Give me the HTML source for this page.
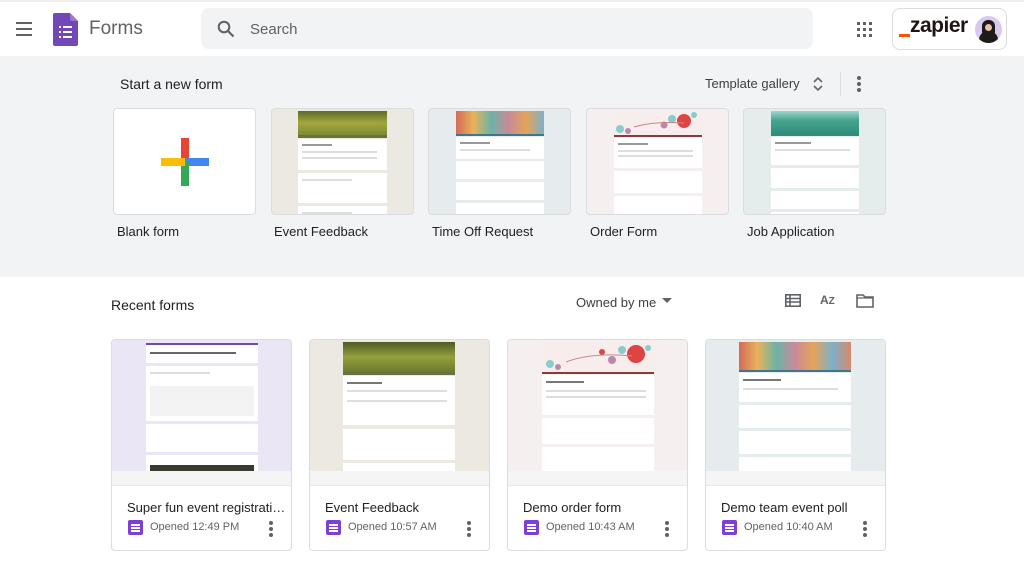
<!DOCTYPE html>
<html><head><meta charset="utf-8">
<style>
*{box-sizing:border-box;margin:0;padding:0}
body{width:1024px;height:562px;overflow:hidden;background:#fff;font-family:"Liberation Sans",Arial,sans-serif;color:#202124;position:relative}
.abs{position:absolute}
.topstrip{left:0;top:0;width:1024px;height:2px;background:#eee}
.search{left:201px;top:8px;width:612px;height:41px;background:#f1f3f4;border-radius:8px}
.gray{left:0;top:56px;width:1024px;height:221px;background:#f1f3f4}
.tcard{top:108px;width:143px;height:107px;border:1px solid #dadce0;border-radius:4px;overflow:hidden}
.tlabel{top:224px;font-size:13px;color:#202124}
.page{position:absolute;background:#fff}
.blk{position:absolute;left:0;right:0;background:#fff}
.line{position:absolute;height:2px;background:#e0e0e0}
.rcard{top:339px;width:181px;height:212px;border:1px solid #dadce0;border-radius:4px;overflow:hidden;background:#fff}
.rthumb{position:absolute;left:0;top:0;width:179px;height:131px;overflow:hidden}
.rstrip{position:absolute;left:0;top:131px;width:179px;height:15px;background:#f5f5f5;border-bottom:1px solid #e8e8e8}
.rtitle{position:absolute;left:15px;top:160px;font-size:13px;color:#202124;white-space:nowrap}
.ricon{position:absolute;left:16px;top:180px;width:15px;height:15px;background:#7e3fd4;border-radius:2px}
.ricon i{position:absolute;left:3px;width:9px;height:1.5px;background:#fff}
.rtime{position:absolute;left:38px;top:181px;font-size:11px;color:#5f6368}
.dots{position:absolute;width:4px}
.dots b{display:block;width:4px;height:4px;border-radius:2px;background:#5f6368;margin-bottom:2px}
.tx{position:absolute;height:2px;background:#ddd}
</style></head><body>
<div class="abs topstrip"></div>
<!-- hamburger -->
<div class="abs" style="left:16px;top:22px;width:16px;height:2px;background:#5f6368"></div>
<div class="abs" style="left:16px;top:28px;width:16px;height:2px;background:#5f6368"></div>
<div class="abs" style="left:16px;top:34px;width:16px;height:2px;background:#5f6368"></div>
<!-- forms logo -->
<svg class="abs" style="left:53px;top:13px" width="25" height="33" viewBox="0 0 25 33"><path d="M2 0H17L25 8V31a2 2 0 0 1-2 2H2a2 2 0 0 1-2-2V2a2 2 0 0 1 2-2z" fill="#7248b9"/><path d="M17 0L25 8H19a2 2 0 0 1-2-2z" fill="#9a75d3"/><g fill="#fff"><rect x="6" y="13" width="2" height="2"/><rect x="10" y="13" width="9" height="2"/><rect x="6" y="18" width="2" height="2"/><rect x="10" y="18" width="9" height="2"/><rect x="6" y="23" width="2" height="2"/><rect x="10" y="23" width="9" height="2"/></g></svg>
<div class="abs" style="left:89px;top:18px;font-size:19px;color:#5f6368">Forms</div>
<div class="abs search"></div>
<svg class="abs" style="left:217px;top:20px" width="18" height="18" viewBox="0 0 18 18"><circle cx="7" cy="7" r="5.3" fill="none" stroke="#5f6368" stroke-width="2"/><path d="M11 11l5.5 5.5" stroke="#5f6368" stroke-width="2.2"/></svg>
<div class="abs" style="left:250px;top:21px;font-size:15px;color:#5f6368">Search</div>
<!-- apps grid -->
<svg class="abs" style="left:857px;top:22px" width="15" height="15" viewBox="0 0 15 15" fill="#5f6368"><rect x="0" y="0" width="3" height="3"/><rect x="6" y="0" width="3" height="3"/><rect x="12" y="0" width="3" height="3"/><rect x="0" y="6" width="3" height="3"/><rect x="6" y="6" width="3" height="3"/><rect x="12" y="6" width="3" height="3"/><rect x="0" y="12" width="3" height="3"/><rect x="6" y="12" width="3" height="3"/><rect x="12" y="12" width="3" height="3"/></svg>
<!-- zapier -->
<div class="abs" style="left:892px;top:8px;width:115px;height:42px;border:1px solid #dadce0;border-radius:8px;background:#fff"></div>
<div class="abs" style="left:899px;top:34px;width:11px;height:3px;background:#ff4f00"></div>
<div class="abs" style="left:910px;top:14px;font-size:21px;font-weight:bold;color:#201515;letter-spacing:-0.5px">zapier</div>
<div class="abs" style="left:975px;top:16px;width:27px;height:27px;border-radius:50%;background:#d9c8ef;overflow:hidden"><div style="position:absolute;left:7px;top:4px;width:13px;height:15px;border-radius:6px 6px 3px 3px;background:#1f1a1a"></div><div style="position:absolute;left:4px;top:15px;width:19px;height:14px;border-radius:9px 9px 0 0;background:#1f1a1a"></div><div style="position:absolute;left:10px;top:8px;width:7px;height:7px;border-radius:50%;background:#e8c0a8"></div></div>

<div class="abs gray"></div>
<div class="abs" style="left:120px;top:76px;font-size:14px;color:#202124">Start a new form</div>
<div class="abs" style="left:705px;top:76px;font-size:13px;color:#3c4043">Template gallery</div>
<svg class="abs" style="left:812px;top:76px" width="12" height="16" viewBox="0 0 12 16"><path d="M2 6l4-4 4 4M2 10l4 4 4-4" fill="none" stroke="#5f6368" stroke-width="1.6"/></svg>
<div class="abs" style="left:840px;top:72px;width:1px;height:24px;background:#dadce0"></div>
<div class="dots" style="left:857px;top:76px"><b></b><b></b><b></b></div>

<!-- blank -->
<div class="abs tcard" style="left:113px;background:#fff">
 <div class="abs" style="left:67px;top:29px;width:8px;height:24px;background:#ea4335"></div>
 <div class="abs" style="left:71px;top:49px;width:24px;height:8px;background:#4285f4"></div>
 <div class="abs" style="left:67px;top:53px;width:8px;height:24px;background:#34a853"></div>
 <div class="abs" style="left:47px;top:49px;width:24px;height:8px;background:#fbbc04"></div>
</div>
<!-- event feedback -->
<div class="abs tcard" style="left:271px;background:#ebe9e1">
 <div class="page" style="left:26px;top:2px;width:89px;height:110px;background:transparent">
  <div class="blk" style="top:0;height:24px;background:linear-gradient(180deg,#5d6a2a,#a3a83c 50%,#7d8a34)"></div>
  <div class="blk" style="top:24px;height:3px;background:#6d7043"></div>
  <div class="blk" style="top:28px;height:31px"><div class="tx" style="left:4px;top:5px;width:30px;background:#999"></div><div class="tx" style="left:4px;top:12px;width:75px"></div><div class="tx" style="left:4px;top:18px;width:75px"></div></div>
  <div class="blk" style="top:62px;height:30px"><div class="tx" style="left:4px;top:6px;width:50px"></div></div>
  <div class="blk" style="top:95px;height:20px"><div class="tx" style="left:4px;top:6px;width:50px"></div></div>
 </div>
</div>
<!-- time off -->
<div class="abs tcard" style="left:428px;background:#e6ecee">
 <div class="page" style="left:27px;top:2px;width:88px;height:110px;background:transparent">
  <div class="blk" style="top:0;height:23px;background:linear-gradient(90deg,#d46a5a,#e9b25a,#6bb3a5,#c98a9a,#e5a35a,#7cb0c8)"></div>
  <div class="blk" style="top:23px;height:2px;background:#40758a"></div>
  <div class="blk" style="top:26px;height:22px"><div class="tx" style="left:4px;top:5px;width:30px;background:#999"></div><div class="tx" style="left:4px;top:12px;width:70px"></div></div>
  <div class="blk" style="top:50px;height:18px"></div>
  <div class="blk" style="top:71px;height:18px"></div>
  <div class="blk" style="top:92px;height:20px"></div>
 </div>
</div>
<!-- order -->
<div class="abs tcard" style="left:586px;background:#f5efef">
 <div class="page" style="left:27px;top:2px;width:88px;height:110px;background:transparent">
  <div class="blk" style="top:0;height:24px;background:#f7eded"></div>
  <svg class="abs" style="left:0;top:0" width="88" height="24"><circle cx="70" cy="10" r="7" fill="#d44"/><circle cx="58" cy="8" r="4" fill="#8cc"/><circle cx="50" cy="14" r="3.5" fill="#b8a"/><circle cx="80" cy="4" r="3" fill="#8cc"/><circle cx="6" cy="18" r="4" fill="#8cc"/><circle cx="14" cy="20" r="3" fill="#b8a"/><path d="M20 16Q40 10 70 12" stroke="#c88" fill="none"/></svg>
  <div class="blk" style="top:24px;height:2px;background:#8b3a3a"></div>
  <div class="blk" style="top:27px;height:30px"><div class="tx" style="left:4px;top:5px;width:30px;background:#999"></div><div class="tx" style="left:4px;top:12px;width:75px"></div><div class="tx" style="left:4px;top:17px;width:75px"></div></div>
  <div class="blk" style="top:60px;height:22px"></div>
  <div class="blk" style="top:85px;height:25px"></div>
 </div>
</div>
<!-- job -->
<div class="abs tcard" style="left:743px;background:#e4edec">
 <div class="page" style="left:27px;top:2px;width:88px;height:110px;background:transparent">
  <div class="blk" style="top:0;height:23px;background:linear-gradient(180deg,#9ed8cc 0%,#47a590 40%,#2f8f7a)"></div>
  <div class="blk" style="top:23px;height:2px;background:#3a8a78"></div>
  <div class="blk" style="top:26px;height:28px"><div class="tx" style="left:4px;top:5px;width:36px;background:#999"></div><div class="tx" style="left:4px;top:12px;width:75px"></div></div>
  <div class="blk" style="top:57px;height:20px"></div>
  <div class="blk" style="top:80px;height:18px"></div>
  <div class="blk" style="top:101px;height:10px"></div>
 </div>
</div>
<div class="abs tlabel" style="left:117px">Blank form</div>
<div class="abs tlabel" style="left:274px">Event Feedback</div>
<div class="abs tlabel" style="left:432px">Time Off Request</div>
<div class="abs tlabel" style="left:590px">Order Form</div>
<div class="abs tlabel" style="left:747px">Job Application</div>

<!-- recent -->
<div class="abs" style="left:111px;top:297px;font-size:14px;color:#202124">Recent forms</div>
<div class="abs" style="left:576px;top:295px;font-size:13px;color:#3c4043">Owned by me</div>
<svg class="abs" style="left:662px;top:298px" width="10" height="6"><path d="M0 0h10L5 5z" fill="#5f6368"/></svg>
<svg class="abs" style="left:785px;top:294px" width="16" height="13" viewBox="0 0 16 13"><rect x="0.8" y="0.8" width="14.4" height="11.4" fill="none" stroke="#5f6368" stroke-width="1.6"/><path d="M1 4.5h14M1 8h14M5 1v11" stroke="#5f6368" stroke-width="1.6"/></svg>
<div class="abs" style="left:820px;top:293px;font-size:12px;color:#5f6368;font-weight:bold">A<span style="font-size:10px">Z</span></div>
<svg class="abs" style="left:856px;top:294px" width="18" height="14" viewBox="0 0 18 14"><path d="M1 1h6l2 2h8v10H1z" fill="none" stroke="#5f6368" stroke-width="1.6"/><path d="M1 4h16" stroke="#5f6368" stroke-width="1.2"/></svg>

<!-- card 1 -->
<div class="abs rcard" style="left:111px">
 <div class="rthumb" style="background:#ebe6f5">
  <div class="page" style="left:34px;top:3px;width:112px;height:20px;border-top:2px solid #7248b9"><div class="tx" style="left:4px;top:7px;width:86px;background:#666"></div></div>
  <div class="page" style="left:34px;top:26px;width:112px;height:55px"><div class="tx" style="left:4px;top:6px;width:60px"></div><div class="tx" style="left:4px;top:20px;width:104px;height:30px;background:#f3f3f3"></div></div>
  <div class="page" style="left:34px;top:84px;width:112px;height:28px"></div>
  <div class="page" style="left:34px;top:115px;width:112px;height:20px"><div style="position:absolute;left:4px;top:10px;width:104px;height:10px;background:#3a3a30"></div></div>
 </div>
 <div class="rstrip"></div>
 <div class="rtitle">Super fun event registrati…</div>
 <div class="ricon"><i style="top:4px"></i><i style="top:7px"></i><i style="top:10px"></i></div>
 <div class="rtime">Opened 12:49 PM</div>
 <div class="dots" style="left:157px;top:181px"><b></b><b></b><b></b></div>
</div>
<!-- card 2 -->
<div class="abs rcard" style="left:309px">
 <div class="rthumb" style="background:#ebe9e1">
  <div class="page" style="left:33px;top:2px;width:112px;height:30px;background:linear-gradient(180deg,#4e5a24,#94a03a 50%,#6d7a2e)"></div>
  <div class="page" style="left:33px;top:32px;width:112px;height:3px;background:#6d7043"></div>
  <div class="page" style="left:33px;top:36px;width:112px;height:49px"><div class="tx" style="left:4px;top:6px;width:35px;background:#777"></div><div class="tx" style="left:4px;top:14px;width:100px"></div><div class="tx" style="left:4px;top:24px;width:100px"></div></div>
  <div class="page" style="left:33px;top:89px;width:112px;height:31px"></div>
  <div class="page" style="left:33px;top:123px;width:112px;height:10px"></div>
 </div>
 <div class="rstrip"></div>
 <div class="rtitle">Event Feedback</div>
 <div class="ricon"><i style="top:4px"></i><i style="top:7px"></i><i style="top:10px"></i></div>
 <div class="rtime">Opened 10:57 AM</div>
 <div class="dots" style="left:157px;top:181px"><b></b><b></b><b></b></div>
</div>
<!-- card 3 -->
<div class="abs rcard" style="left:507px">
 <div class="rthumb" style="background:#f5efef">
  <div class="page" style="left:34px;top:2px;width:112px;height:30px;background:#f7eded"><svg width="112" height="30"><circle cx="94" cy="12" r="9" fill="#d44"/><circle cx="80" cy="8" r="4" fill="#8cc"/><circle cx="70" cy="18" r="4" fill="#b8a"/><circle cx="60" cy="10" r="3" fill="#d44"/><circle cx="106" cy="6" r="3" fill="#8cc"/><circle cx="8" cy="22" r="4" fill="#8cc"/><circle cx="16" cy="25" r="3" fill="#b8a"/><path d="M24 20Q50 10 90 14" stroke="#c88" fill="none"/></svg></div>
  <div class="page" style="left:34px;top:32px;width:112px;height:2px;background:#8b3a3a"></div>
  <div class="page" style="left:34px;top:35px;width:112px;height:40px"><div class="tx" style="left:4px;top:6px;width:38px;background:#777"></div><div class="tx" style="left:4px;top:15px;width:100px"></div><div class="tx" style="left:4px;top:21px;width:100px"></div></div>
  <div class="page" style="left:34px;top:78px;width:112px;height:26px"></div>
  <div class="page" style="left:34px;top:107px;width:112px;height:26px"></div>
 </div>
 <div class="rstrip"></div>
 <div class="rtitle">Demo order form</div>
 <div class="ricon"><i style="top:4px"></i><i style="top:7px"></i><i style="top:10px"></i></div>
 <div class="rtime">Opened 10:43 AM</div>
 <div class="dots" style="left:157px;top:181px"><b></b><b></b><b></b></div>
</div>
<!-- card 4 -->
<div class="abs rcard" style="left:705px">
 <div class="rthumb" style="background:#e6ecee">
  <div class="page" style="left:33px;top:2px;width:112px;height:28px;background:linear-gradient(90deg,#d46a5a,#e9b25a,#6bb3a5,#c98a9a,#e5a35a,#7cb0c8,#d78a6a)"></div>
  <div class="page" style="left:33px;top:30px;width:112px;height:2px;background:#40758a"></div>
  <div class="page" style="left:33px;top:33px;width:112px;height:29px"><div class="tx" style="left:4px;top:6px;width:38px;background:#777"></div><div class="tx" style="left:4px;top:15px;width:95px"></div></div>
  <div class="page" style="left:33px;top:65px;width:112px;height:23px"></div>
  <div class="page" style="left:33px;top:91px;width:112px;height:23px"></div>
  <div class="page" style="left:33px;top:117px;width:112px;height:16px"></div>
 </div>
 <div class="rstrip"></div>
 <div class="rtitle">Demo team event poll</div>
 <div class="ricon"><i style="top:4px"></i><i style="top:7px"></i><i style="top:10px"></i></div>
 <div class="rtime">Opened 10:40 AM</div>
 <div class="dots" style="left:157px;top:181px"><b></b><b></b><b></b></div>
</div>
</body></html>
